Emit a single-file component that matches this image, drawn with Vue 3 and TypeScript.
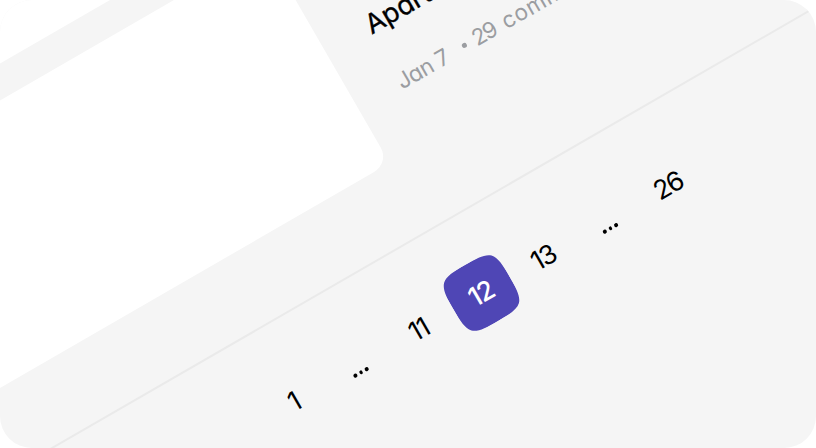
<script setup lang="ts">
interface PageItem {
  label: string
  kind: 'page' | 'gap' | 'active'
}

const title: string = 'Apartments'
const date: string = 'Jan 7'
const comments: string[] = ['29', 'comments']
const pages: PageItem[] = [
  { label: '1', kind: 'page' },
  { label: '…', kind: 'gap' },
  { label: '11', kind: 'page' },
  { label: '12', kind: 'active' },
  { label: '13', kind: 'page' },
  { label: '…', kind: 'gap' },
  { label: '26', kind: 'page' },
]
</script>

<template>
  <main class="frame">
    <div class="board">
      <div class="card previous"></div>
      <article class="post">
        <div class="card picture"></div>
        <div class="details">
          <h2 class="title">{{ title }}</h2>
          <p class="meta">
            <span class="date">{{ date }}</span>
            <span class="dot"></span>
            <span class="count">{{ comments[0] }}</span>
            <span class="word">{{ comments[1] }}</span>
          </p>
        </div>
      </article>
      <nav class="pager">
        <a v-for="(page, i) in pages" :key="i" class="item" :class="page.kind">
          <span v-if="page.kind === 'gap'" class="ellipsis"><i></i><i></i><i></i></span>
          <template v-else>
            <svg v-if="page.kind === 'active'" class="tile" viewBox="0 0 64 64">
              <path d="M32 0C46 0 54 .5 59 5C63.5 10 64 18 64 32S63.5 54 59 59C54 63.5 46 64 32 64S10 63.5 5 59C.5 54 0 46 0 32S.5 10 5 5C10 .5 18 0 32 0Z" fill="#4f46b5" />
            </svg>
            <span class="label">{{ page.label }}</span>
          </template>
        </a>
      </nav>
    </div>
  </main>
</template>

<style>
body {
  margin: 0;
  background: #fff;
}
</style>

<style scoped>
.frame {
  width: 816px;
  height: 448px;
  overflow: hidden;
  border-radius: 32px;
  background: #f5f5f5;
  font-family: Inter, "Liberation Sans", sans-serif;
  font-feature-settings: "cv11" 1;
}
.board {
  width: 1000px;
  margin-left: -260px;
  transform-origin: 260px 0;
  transform: rotate(-30deg);
  display: flex;
  flex-direction: column;
}
.card {
  width: 515.5px;
  background: #fff;
}
.previous {
  height: 55px;
  margin-bottom: 32px;
}
.post {
  display: flex;
  height: 326px;
  border-bottom: 2px solid #eaeaea;
}
.picture {
  height: 248.5px;
  border-radius: 18px;
  flex: none;
}
.details {
  padding: 102px 0 0 49px;
}
.title {
  margin: 0;
  font-size: 27px;
  line-height: 36px;
  font-weight: 400;
  -webkit-text-stroke: 0.35px #000;
  letter-spacing: 0;
  color: #000;
}
.meta {
  display: flex;
  align-items: center;
  margin: 28px 0 0 -1px;
  height: 36px;
  font-size: 22.5px;
  line-height: 36px;
  color: #9b9da1;
  white-space: nowrap;
}
.date {
  width: 73px;
  box-sizing: border-box;
  letter-spacing: -0.5px;
}
.dot {
  width: 5px;
  height: 5px;
  border-radius: 50%;
  background: currentColor;
}
.count {
  margin-left: 8.5px;
  width: 34px;
  letter-spacing: -1.5px;
}
.word {
  letter-spacing: 0.8px;
}
.pager {
  display: flex;
  gap: 8px;
  padding: 48.5px 0 0 282.5px;
}
.item {
  display: grid;
  place-items: center;
  width: 64px;
  height: 64px;
  font-size: 26.5px;
  line-height: 32px;
  letter-spacing: -1.6px;
  color: #000;
}
.item > * {
  grid-area: 1 / 1;
}
.tile {
  width: 65px;
  height: 65px;
  margin: -1.5px -0.5px 0;
}
.label {
  position: relative;
  padding: 0 1.6px 2.5px 0;
}
.active {
  color: #fff;
  font-weight: 500;
}
.ellipsis {
  display: flex;
  gap: 2.8px;
  padding-top: 15px;
}
.ellipsis i {
  width: 3.8px;
  height: 3.8px;
  border-radius: 50%;
  background: #000;
}
</style>
